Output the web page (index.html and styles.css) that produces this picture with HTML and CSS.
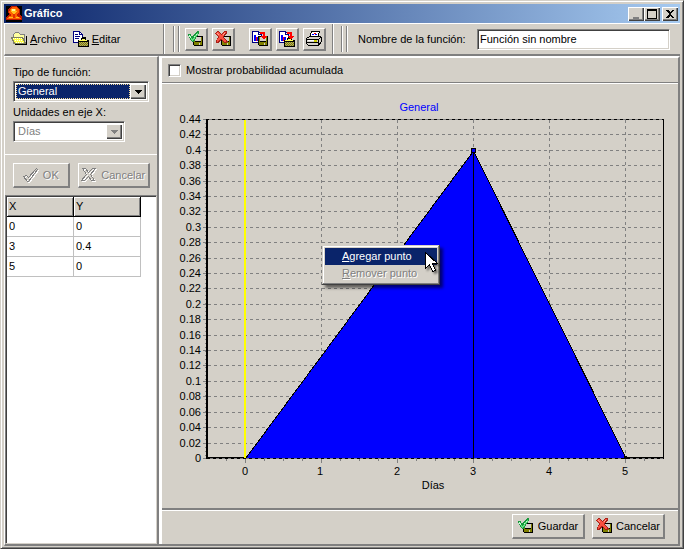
FILE: index.html
```html
<!DOCTYPE html>
<html lang="es">
<head>
<meta charset="utf-8">
<title>Gráfico</title>
<link rel="stylesheet" href="styles.css">
</head>
<body>
<svg class="symbols" aria-hidden="true">
  <symbol id="disk" viewBox="0 0 10 10"><path d="M0 0h10v10H1L0 9z"/><path fill="#808000" d="M1 1h1v5h6V1h1v8H1z"/><path fill="#d4d0c8" d="M2 1h6v4H2zM6 7h1v2H6z"/></symbol>
  <symbol id="save-ok" viewBox="0 0 16 16"><use href="#disk" x="5" y="5" width="10" height="10"/><path fill="#18983c" d="M0 3h3l1 3 5-6h2v2L6 11H4L1 6z"/><path fill="#60e080" d="M1 4h1l2 4h1l5-7v2l-5 7H4L2 6z"/><path fill="#c0ffd0" d="M1 4h1v1h1v2H2V6H1zM8 3h1v1H8zM6 5h1v1H6z"/></symbol>
  <symbol id="save-no" viewBox="0 0 16 16"><use href="#disk" x="6" y="5" width="10" height="10"/><path fill="#a82018" d="M0 2l3-2 3 3 4-3h2v2L9 6l4 5-2 1H9L6 9l-3 3H1v-2l2-4z"/><path fill="#f85040" d="M1 2l2-1 3 3 4-3h1L8 6l3 4v1h-1L6 8l-4 3V9l2-3z"/><path fill="#ffa898" d="M2 2h1v1h1v1H3V3H2zM9 2h1v1H9zM8 3h1v1H8z"/></symbol>
  <symbol id="page" viewBox="0 0 10 12"><path fill="#fff" stroke="#000080" d="M.5 .5h6l3 3v8h-9z"/><path fill="none" stroke="#000080" d="M6.500 0v3.500h3"/></symbol>
  <symbol id="clip" viewBox="0 0 11 10"><path d="M0 3h3V1l2-1h2l1 1v2h3v7H0z"/><path fill="#ffff60" d="M4 2h3v1h2v1H1V3h3z"/><path fill="#808000" d="M1 5h9v4H1z"/><path stroke="#b0a870" stroke-dasharray="1 1" d="M1 5.500h9M2 6.500h8M1 7.500h9M2 8.500h8"/></symbol>
  <symbol id="red-arrow" viewBox="0 0 7 8"><path fill="#f00" d="M0 0h5v4h2L4 8 1 4h2V2H0z"/></symbol>
  <symbol id="chart-save" viewBox="0 0 16 16"><use href="#page" width="10" height="12"/><path stroke="#00f" stroke-width="2" d="M3 4v6M6 6v4"/><path stroke="#f00" d="M4.500 6v4"/><use href="#disk" x="6" y="5" width="10" height="10"/><use href="#red-arrow" x="8" y="1" width="7" height="8"/></symbol>
  <symbol id="chart-copy" viewBox="0 0 16 16"><use href="#page" width="10" height="12"/><path stroke="#00f" stroke-width="2" d="M3 4v6M6 6v4"/><path stroke="#f00" d="M4.500 6v4"/><use href="#clip" x="5" y="6" width="11" height="10"/><use href="#red-arrow" x="8" y="1" width="7" height="8"/></symbol>
</svg>
<div class="window">
  <header class="titlebar">
    <svg class="app-icon" viewBox="0 0 16 16"><path d="M0 0h16v16H0z"/><path fill="#c01800" d="M3 2l3-2h4l4 3v5l2 3v3H0v-3l3-3-1-3z"/><path fill="#ff6000" d="M4 3l3-2h3l3 3v3l-3 2 5 3v1H1v-1l5-3-3-2z"/><path fill="#ffc020" d="M5 3h5l1 3-3 2-3-2zM3 11h4v1H3zM10 11h3v1h-3z"/><path fill="#fff8a0" d="M6 3h3v2H6z"/><path fill="#e03000" d="M7 8h2v4H7z"/></svg>
    <h1>Gráfico</h1>
    <button class="cap" aria-label="Minimizar"><svg viewBox="0 0 12 10"><path fill="#808080" d="M3 8h6v2H3z"/></svg></button>
    <button class="cap" aria-label="Maximizar"><svg viewBox="0 0 12 10"><path fill-rule="evenodd" d="M1 0h10v10H1zM2 2v7h8V2z"/></svg></button>
    <button class="cap close" aria-label="Cerrar"><svg viewBox="0 0 12 10"><path d="M2 1h2l2 2 2-2h2L7 5l3 4H8L6 7 4 9H2l3-4z"/></svg></button>
  </header>
  <div class="toolbar">
    <nav class="menu">
      <button><svg class="ico" viewBox="0 0 16 16"><path fill="#ffffa0" stroke="#808080" d="M2.500 12.500v-9l2-2h3l2 2h4v9"/><path fill="#ffff40" stroke="#808060" d="M.5 6.500h11l3 6H3.500z"/><path stroke="#fff" stroke-dasharray="1 1" d="M2 7.500h9M4 9.500h8M5 11.500h8"/><path fill="none" stroke="#000" d="M4 13.500h11.500V5"/></svg><span><u>A</u>rchivo</span></button>
      <button><svg class="ico" viewBox="0 0 16 16"><use href="#page" width="10" height="12"/><path stroke="#000080" d="M2 3.500h3M2 5.500h5M2 7.500h4"/><use href="#clip" x="5" y="6" width="11" height="10"/></svg><span><u>E</u>ditar</span></button>
    </nav>
    <div class="group tools">
      <i class="grip"></i>
      <button class="tool" aria-label="Guardar"><svg class="ico"><use href="#save-ok"/></svg></button>
      <button class="tool" aria-label="Descartar"><svg class="ico"><use href="#save-no"/></svg></button>
      <button class="tool next" aria-label="Exportar"><svg class="ico"><use href="#chart-save"/></svg></button>
      <button class="tool" aria-label="Copiar"><svg class="ico"><use href="#chart-copy"/></svg></button>
      <button class="tool" aria-label="Imprimir"><svg class="ico" viewBox="0 0 16 16"><path fill="#fff" stroke="#000" d="M5.500.5h8l-2 6h-8z"/><path stroke="#00f" d="M6 3.500h2M9 3.500h2M5 5.500h5"/><path stroke="#f00" d="M8 2.500h2"/><path fill="#d4d0c8" stroke="#000" d="M.5 7.500l3-2h11l1 1v4l-3 4H2.500l-2-2z"/><path fill="none" stroke="#000" d="M1 8.500h11l3-2M12.500 9v5M1 11.500h11"/><path stroke="#fff" d="M2 9.500h9"/><path stroke="#cc0" stroke-width="2" d="M8 10h3"/></svg></button>
    </div>
    <div class="group name">
      <i class="grip"></i>
      <label for="fname">Nombre de la función:</label>
      <input id="fname" type="text" value="Función sin nombre">
    </div>
  </div>
  <div class="main">
    <aside class="side">
      <div class="form">
        <label for="tipo">Tipo de función:</label>
        <div class="combo"><select id="tipo" class="active"><option>General</option></select><i class="drop"><svg viewBox="0 0 7 4"><path d="M0 0h7v1H6v1H5v1H4v1H3V3H2V2H1V1H0z"/></svg></i></div>
        <label for="unid">Unidades en eje X:</label>
        <div class="combo short"><select id="unid" disabled><option>Días</option></select><i class="drop off"><svg viewBox="0 0 7 4"><path d="M0 0h7v1H6v1H5v1H4v1H3V3H2V2H1V1H0z"/></svg></i></div>
      </div>
      <div class="confirm">
        <button class="btn" disabled><svg class="ico" viewBox="0 0 16 16"><path fill="none" stroke="#fff" d="M1.500 10.500l3-1 2 2 8-9 1 1-9 12h-1z"/><path fill="none" stroke="#808080" d="M.5 9.500l3-1 2 2 8-9 1 1-9 12h-1z"/></svg>OK</button>
        <button class="btn wide" disabled><svg class="ico" viewBox="0 0 16 16"><path fill="none" stroke="#fff" d="M2.500 2.500h3l3 4 4-4h3l-5 6 4 6h-3l-3-4-4 4h-3l5-6z"/><path fill="none" stroke="#808080" d="M1.500 1.500h3l3 4 4-4h3l-5 6 4 6h-3l-3-4-4 4h-3l5-6z"/></svg>Cancelar</button>
      </div>
      <div class="grid">
        <table>
          <thead><tr><th>X</th><th>Y</th></tr></thead>
          <tbody><tr><td>0</td><td>0</td></tr><tr><td>3</td><td>0.4</td></tr><tr><td>5</td><td>0</td></tr></tbody>
        </table>
      </div>
    </aside>
    <main class="content">
      <div class="option"><input type="checkbox" id="acum"><label for="acum">Mostrar probabilidad acumulada</label></div>
      <div class="plot">
        <svg class="chart" viewBox="162 84 516 424" role="img" aria-label="General">
          <path class="dash" d="M208 134.500h455M208 150.500h455M208 165.500h455M208 181.500h455M208 196.500h455M208 211.500h455M208 227.500h455M208 242.500h455M208 258.500h455M208 273.500h455M208 288.500h455M208 304.500h455M208 319.500h455M208 335.500h455M208 350.500h455M208 365.500h455M208 381.500h455M208 396.500h455M208 412.500h455M208 427.500h455M208 443.500h455M321.500 120v337M397.500 120v337M473.500 120v337M549.500 120v337M625.500 120v337"/>
          <path class="axis" d="M206 119.500h458M663.500 119v339M206 457.500h458"/>
          <path class="axis thick" d="M207 119v340"/>
          <path class="area" d="M246 458L473.500 151 626 458z"/>
          <path class="axis" d="M473.500 151v307M206 458.500h458"/>
          <path class="dash" d="M209 119.500h454M210 458.500h453"/>
          <path class="tick" d="M203 119.500h3M203 134.500h3M203 150.500h3M203 165.500h3M203 181.500h3M203 196.500h3M203 211.500h3M203 227.500h3M203 242.500h3M203 258.500h3M203 273.500h3M203 288.500h3M203 304.500h3M203 319.500h3M203 335.500h3M203 350.500h3M203 365.500h3M203 381.500h3M203 396.500h3M203 412.500h3M203 427.500h3M203 443.500h3M203 458.500h3M245.500 459v4M321.500 459v4M397.500 459v4M473.500 459v4M549.500 459v4M625.500 459v4"/>
          <path class="tick minor-y" d="M205.500 119v340"/>
          <path class="tick minor-x" d="M226 460h436"/>
          <path class="zero" d="M245 120v338"/>
          <path class="point" d="M471.500 148.500h4v4h-4z"/>
          <path class="knob" d="M624.500 456.500h2v2h-2z"/>
          <g class="ylab"><text x="201" y="123">0.44</text><text x="201" y="138">0.42</text><text x="201" y="154">0.4</text><text x="201" y="169">0.38</text><text x="201" y="185">0.36</text><text x="201" y="200">0.34</text><text x="201" y="215">0.32</text><text x="201" y="231">0.3</text><text x="201" y="246">0.28</text><text x="201" y="262">0.26</text><text x="201" y="277">0.24</text><text x="201" y="292">0.22</text><text x="201" y="308">0.2</text><text x="201" y="323">0.18</text><text x="201" y="339">0.16</text><text x="201" y="354">0.14</text><text x="201" y="369">0.12</text><text x="201" y="385">0.1</text><text x="201" y="400">0.08</text><text x="201" y="416">0.06</text><text x="201" y="431">0.04</text><text x="201" y="447">0.02</text><text x="201" y="462">0</text></g>
          <g class="xlab"><text x="245" y="475">0</text><text x="320" y="475">1</text><text x="397" y="475">2</text><text x="473" y="475">3</text><text x="549" y="475">4</text><text x="625" y="475">5</text><text x="433" y="489">Días</text><text class="heading" x="419" y="111">General</text></g>
        </svg>
        <div class="popup" role="menu">
          <button role="menuitem" class="hot"><u>A</u>gregar punto</button>
          <button role="menuitem" disabled><u>R</u>emover punto</button>
          <svg class="cursor" viewBox="0 0 14 22"><path fill="#fff" stroke="#000" d="M.5.5v16l4-4 3 7 3-1-3-7h5z"/></svg>
        </div>
      </div>
      <footer class="actions">
        <button class="btn"><svg class="ico"><use href="#save-ok"/></svg>Guardar</button>
        <button class="btn"><svg class="ico"><use href="#save-no"/></svg>Cancelar</button>
      </footer>
    </main>
  </div>
</div>
</body>
</html>
```

FILE: styles.css
```css
* { box-sizing: border-box; }
html, body { height: 100%; margin: 0; }
body, button, input, select { font: 11px/13px "Liberation Sans", Arial, sans-serif; color: #000; }
body { background: #d4d0c8; }
button { background: #d4d0c8; border: 0; padding: 0; margin: 0; }
svg { shape-rendering: crispEdges; }
label { white-space: nowrap; }
.symbols { position: absolute; width: 0; height: 0; }
.ico { width: 16px; height: 16px; flex: none; overflow: visible; }

.window {
  height: 100%;
  display: flex;
  flex-direction: column;
  padding: 2px;
  border: 1px solid #d4d0c8;
  border-right-color: #404040;
  border-bottom-color: #404040;
  box-shadow: inset 1px 1px #fff, inset -1px -1px #808080;
}
.titlebar {
  display: flex;
  align-items: center;
  height: 19px;
  margin: 1px 1px 0;
  flex: none;
  padding-right: 2px;
  background: linear-gradient(to right, #0a246a, #a6caf0);
  color: #fff;
}
.app-icon { width: 16px; height: 16px; margin: 0 2px; }
.titlebar h1 { flex: 1; margin: 0; font-size: 11px; }
.cap {
  width: 16px;
  height: 14px;
  display: grid;
  place-items: center;
  box-shadow: inset 1px 1px #fff, inset -1px -1px #404040, inset -2px -2px #808080;
}
.cap svg { width: 12px; height: 10px; }
.cap.close { margin-left: 2px; }

.toolbar {
  display: flex;
  height: 33px;
  flex: none;
  margin: 0 1px;
  border-top: 1px solid #fff;
  border-left: 1px solid #fff;
  border-bottom: 2px solid #808080;
}
.menu { display: flex; gap: 6px; width: 159px; padding-left: 6px; align-items: center; border-right: 1px solid #808080; }
.menu button { display: flex; align-items: center; gap: 3px; }
.group { display: flex; align-items: center; border-left: 1px solid #fff; }
.grip { width: 6px; height: 26px; border: solid #808080; border-width: 0 1px; box-shadow: inset 1px 0 #fff, inset -1px 0 #d4d0c8, 1px 0 #fff; }
.tools { padding: 0 6px 0 8px; border-right: 1px solid #808080; }
.tool {
  width: 23px;
  height: 23px;
  display: grid;
  place-items: center;
  margin-right: 4px;
  border: solid;
  border-width: 1px 2px 2px 1px;
  border-color: #fff #808080 #808080 #fff;
}
.tools .grip { margin-right: 6px; }
.tool.next { margin-left: 10px; }
.tool:last-child { margin-right: 0; }
.name { flex: 1; padding: 0 10px 0 7px; }
.name label { margin-left: 11px; width: 119px; }
.name input {
  flex: 1;
  min-width: 0;
  height: 21px;
  padding: 0 2px;
  border: 1px solid;
  border-color: #808080 #fff #fff #808080;
  box-shadow: inset 1px 1px #404040, inset -1px -1px #d4d0c8;
  background: #fff;
}

.main { flex: 1; display: flex; min-height: 0; margin: 0 1px; border-left: 1px solid #fff; border-bottom: 2px solid #808080; }
.side { width: 154px; flex: none; display: flex; flex-direction: column; border-top: 1px solid #fff; border-right: 2px solid #808080; }
.form { display: flex; flex-direction: column; padding: 9px 8px 11px; }
.form label { height: 15px; }
.combo {
  display: flex;
  width: 136px;
  height: 21px;
  margin-bottom: 4px;
  padding: 2px;
  border: 1px solid;
  border-color: #808080 #fff #fff #808080;
  box-shadow: inset 1px 1px #404040, inset -1px -1px #d4d0c8;
  background: #fff;
}
.combo.short { width: 112px; margin-bottom: 1px; }
.combo select { appearance: none; flex: 1; min-width: 0; border: 0; border-radius: 0; margin: 0; padding: 0 2px; background: #fff; opacity: 1; }
.combo select:disabled { color: #808080; }
.combo select.active { background: #0a246a; color: #fff; outline: 1px dotted #f5db95; outline-offset: -1px; }
.drop { width: 16px; display: grid; place-items: center; background: #d4d0c8; box-shadow: inset 1px 1px #fff, inset -1px -1px #404040, inset -2px -2px #808080; }
.drop svg { width: 7px; height: 4px; }
.drop.off svg { fill: #808080; }
.confirm { display: flex; gap: 8px; padding: 8px 7px 7px 8px; border-top: 1px solid #fff; }
.btn {
  display: flex;
  align-items: center;
  justify-content: center;
  gap: 4px;
  width: 73px;
  height: 25px;
  border: solid;
  border-width: 1px 2px 2px 1px;
  border-color: #fff #808080 #808080 #fff;
}
.btn:disabled { width: 57px; color: #808080; text-shadow: 1px 1px #fff; }
.btn.wide:disabled { width: 73px; }
.grid { flex: 1; background: #fff; border: 1px solid; border-color: #808080 #d4d0c8 #d4d0c8 #808080; box-shadow: inset 1px 1px #404040; padding: 1px 0 0 1px; }
table { border-collapse: separate; border-spacing: 0; table-layout: fixed; width: 134px; }
th, td { height: 20px; padding: 0 2px; text-align: left; font-weight: normal; border: solid #c0c0c0; border-width: 0 1px 1px 0; }
th { background: #d4d0c8; border-color: #000; box-shadow: inset 1px 1px #fff, inset -1px -1px #808080; }

.content { flex: 1; min-width: 0; display: flex; flex-direction: column; border-left: 3px solid #fff; border-top: 2px solid #fff; border-right: 2px solid #808080; }
.option { display: flex; align-items: center; gap: 5px; height: 25px; flex: none; padding: 0 6px; border-bottom: 1px solid #808080; }
.option input {
  appearance: none;
  width: 13px;
  height: 13px;
  margin: 0;
  background: #fff;
  border: 1px solid;
  border-color: #808080 #fff #fff #808080;
  box-shadow: inset 1px 1px #404040, inset -1px -1px #d4d0c8;
}
.plot { flex: 1; min-height: 0; position: relative; border-top: 1px solid #fff; border-bottom: 2px solid #808080; }
.chart { display: block; width: 100%; height: 100%; font-size: 11px; }
.chart path { fill: none; }
.dash { stroke: #808080; stroke-dasharray: 3 3; }
.axis, .tick { stroke: #000; }
.axis.thick { stroke-width: 2; }
.tick { stroke: #808080; }
.minor-y { stroke-dasharray: 1 3; }
.minor-x { stroke-width: 2; stroke-dasharray: 1 18; }
.zero { stroke: #ff0; stroke-width: 2; }
.chart .area { fill: #00f; stroke: #000; }
.chart .point { fill: #00f; stroke: #000; }
.knob { stroke: #000; }
.ylab { text-anchor: end; }
.xlab { text-anchor: middle; }
.heading { fill: #00f; }
.popup {
  position: absolute;
  left: 160px;
  top: 161px;
  width: 118px;
  padding: 3px;
  background: #d4d0c8;
  border: 0;
  box-shadow: inset -1px -1px #404040, inset 1px 1px #d4d0c8, inset -2px -2px #808080, inset 2px 2px #fff, 3px 3px 3px rgba(0, 0, 0, .55);
}
.popup button { display: block; width: 100%; height: 17px; padding-left: 17px; text-align: left; }
.popup .hot { background: #0a246a; color: #fff; }
.popup button:disabled { color: #808080; text-shadow: 1px 1px #fff; }
.cursor { position: absolute; left: 103px; top: 7px; width: 14px; height: 22px; filter: drop-shadow(2px 2px 1px rgba(0, 0, 0, .5)); }
.actions { display: flex; justify-content: flex-end; gap: 7px; height: 34px; flex: none; padding: 3px 13px 0 0; border-top: 1px solid #fff; }
```
